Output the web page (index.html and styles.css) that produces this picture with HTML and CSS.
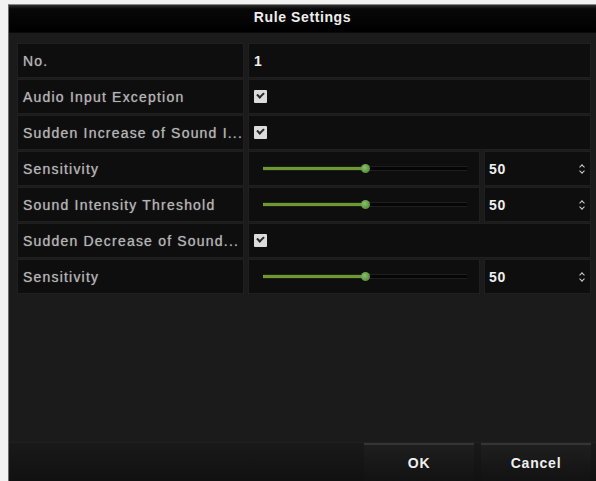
FILE: index.html
```html
<!DOCTYPE html>
<html lang="en">

<head>
    <meta charset="UTF-8">
    <title>Rule Settings</title>
    <link rel="stylesheet" href="styles.css">
</head>

<body>
    <div class="dialog">
        <div class="title-bar">Rule Settings</div>

        <div class="content">
            <!-- Rule number and main switch -->
            <div class="row">
                <div class="label">No.</div>
                <div class="value">1</div>
            </div>
            <div class="row">
                <div class="label">Audio Input Exception</div>
                <div class="value"><span class="check"></span></div>
            </div>

            <!-- Sudden increase -->
            <div class="row">
                <div class="label">Sudden Increase of Sound I...</div>
                <div class="value"><span class="check"></span></div>
            </div>
            <div class="row">
                <div class="label">Sensitivity</div>
                <div class="slider-cell">
                    <div class="track"><div class="fill" style="width: 50%;"></div></div>
                </div>
                <div class="number">50<span class="spin"></span></div>
            </div>
            <div class="row">
                <div class="label">Sound Intensity Threshold</div>
                <div class="slider-cell">
                    <div class="track"><div class="fill" style="width: 50%;"></div></div>
                </div>
                <div class="number">50<span class="spin"></span></div>
            </div>

            <!-- Sudden decrease -->
            <div class="row">
                <div class="label">Sudden Decrease of Sound...</div>
                <div class="value"><span class="check"></span></div>
            </div>
            <div class="row">
                <div class="label">Sensitivity</div>
                <div class="slider-cell">
                    <div class="track"><div class="fill" style="width: 50%;"></div></div>
                </div>
                <div class="number">50<span class="spin"></span></div>
            </div>
        </div>

        <div class="footer">
            <button class="btn">OK</button>
            <button class="btn">Cancel</button>
        </div>
    </div>
</body>

</html>
```

FILE: styles.css
```css
/* Estilos generales */
body {
    margin: 0;
    padding: 4px 0 0 8px;
    background: #f2f2f2;
    font-family: 'Liberation Sans', Arial, sans-serif;
    overflow: hidden;
}

.dialog {
    width: 588px;
    height: 477px;
    background: #1b1b1b;
    border-left: 1px solid #6a6a6a;
    border-top: 1px solid #888;
    box-sizing: border-box;
    display: flex;
    flex-direction: column;
}

.title-bar {
    height: 27px;
    line-height: 25px;
    text-align: center;
    color: #eee;
    font-size: 14px;
    font-weight: bold;
    letter-spacing: 0.6px;
    background: linear-gradient(#2e2e2e 0, #080808 4px, #000 100%);
    border-bottom: 1px solid #0a0a0a;
}

.content {
    flex: 1;
    padding: 10px 5px 0 8px;
    display: flex;
    flex-direction: column;
    gap: 1px;
}

.row {
    display: flex;
    gap: 4px;
    height: 35px;
}

.row > div {
    background: #0e0e0e;
    border: 1px solid #1f1f1f;
    box-sizing: border-box;
    display: flex;
    align-items: center;
}

.label {
    width: 227px;
    padding-left: 5px;
    color: #b4b4b4;
    font-size: 14px;
    letter-spacing: 1.2px;
    white-space: nowrap;
    text-shadow: 0 0 1px #8a8a8a;
}

.value {
    flex: 1;
    padding-left: 5px;
    color: #eee;
    font-size: 14px;
    font-weight: bold;
}

.check {
    width: 13px;
    height: 13px;
    background: #dcdcdc;
    border-radius: 1px;
    position: relative;
    display: block;
}

.check::after {
    content: '';
    position: absolute;
    left: 3px;
    top: 2px;
    width: 5px;
    height: 3px;
    border-left: 2px solid #2a2a2a;
    border-bottom: 2px solid #2a2a2a;
    transform: rotate(-45deg);
}

.slider-cell {
    width: 232px;
    padding: 0 12px 0 14px;
}

.track {
    flex: 1;
    height: 3px;
    background: #050505;
    border-top: 1px solid #1e1e1e;
    border-bottom: 1px solid #1e1e1e;
}

.fill {
    height: 3px;
    background: #6c9a2e;
    position: relative;
}

.fill::after {
    content: '';
    position: absolute;
    right: -5px;
    top: -3px;
    width: 9px;
    height: 9px;
    border-radius: 50%;
    background: radial-gradient(circle at 40% 40%, #8cc06a, #3f7a2a);
}

.number {
    flex: 1;
    padding: 0 5px 0 4px;
    color: #eee;
    font-size: 14px;
    font-weight: bold;
    letter-spacing: 0.6px;
    justify-content: space-between;
}

.spin {
    width: 6px;
    height: 10px;
    position: relative;
}

.spin::before,
.spin::after {
    content: '';
    position: absolute;
    left: 1px;
    width: 3px;
    height: 3px;
    border-left: 1.5px solid #cfcfcf;
    border-top: 1.5px solid #cfcfcf;
}

.spin::before {
    top: 1px;
    transform: rotate(45deg);
}

.spin::after {
    bottom: 1px;
    transform: rotate(-135deg);
}

.footer {
    height: 38px;
    display: flex;
    justify-content: flex-end;
    gap: 7px;
    padding-right: 5px;
    background: linear-gradient(#191919, #111);
    border-top: 1px solid #202020;
}

.btn {
    width: 110px;
    height: 100%;
    border: none;
    border-top: 2px solid #353535;
    background: linear-gradient(#1e1e1e, #121212);
    color: #f0f0f0;
    font-family: 'Liberation Sans', Arial, sans-serif;
    font-size: 14px;
    font-weight: bold;
    letter-spacing: 0.8px;
    padding: 0;
}
```
